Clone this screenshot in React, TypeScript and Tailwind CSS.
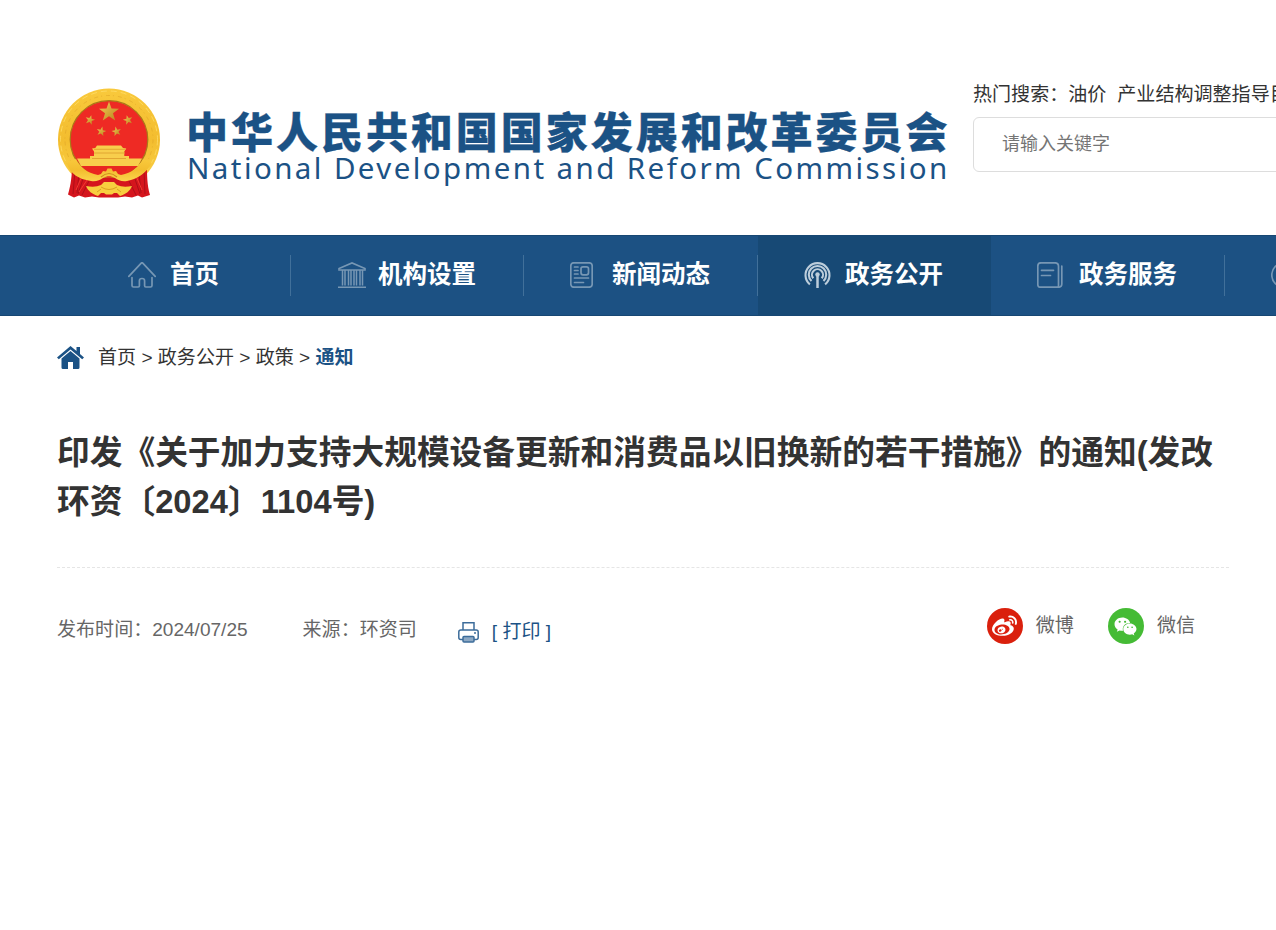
import type { ReactNode } from "react";
import { FaWeibo, FaWeixin } from "react-icons/fa";

interface ItemMenu {
  titulo: string;
  icone: ReactNode;
  ativo?: boolean;
  largura: string;
}

const STAR = "0,-10.500 2.500,-3.400 10,-3.300 4,1.300 6.200,8.500 0,4.200 -6.200,8.500 -4,1.300 -10,-3.300 -2.500,-3.400";

function Emblema() {
  return (
    <svg width="104" height="112" viewBox="0 0 104 112" className="shrink-0">
      <defs>
        <linearGradient id="gold" x1="0" y1="0" x2="0" y2="1">
          <stop offset="0" stopColor="#f9c93c" />
          <stop offset="0.5" stopColor="#f3bd2f" />
          <stop offset="1" stopColor="#fbd54c" />
        </linearGradient>
        <linearGradient id="star" x1="0" y1="0" x2="1" y2="1">
          <stop offset="0" stopColor="#f5cf57" />
          <stop offset="1" stopColor="#b9811c" />
        </linearGradient>
      </defs>
      <circle cx="52" cy="52.500" r="51" fill="url(#gold)" />
      <circle cx="52" cy="52.500" r="44" fill="none" stroke="#dca026" strokeWidth="1" strokeDasharray="4 3 1 4" opacity="0.5" />
      <circle cx="52" cy="52.500" r="48.500" fill="none" stroke="#ffdf6d" strokeWidth="1" strokeDasharray="6 4" opacity="0.7" />
      <circle cx="52" cy="52.500" r="38.800" fill="#ee2a24" stroke="#a97918" strokeWidth="1.200" />
      <g fill="url(#star)">
        <polygon points={STAR} transform="translate(52 25)" />
        <polygon points={STAR} transform="translate(33 33) rotate(15) scale(.48)" />
        <polygon points={STAR} transform="translate(71 33) rotate(-15) scale(.48)" />
        <polygon points={STAR} transform="translate(44.300 44.500) rotate(12) scale(.48)" />
        <polygon points={STAR} transform="translate(59.500 44.500) rotate(-12) scale(.48)" />
      </g>
      <g fill="#f8ce4c">
        <path d="M40 58.500h24l2 2.500 3.300.5-2 3V70.500H37V64.500l-2-3 3.300-.5z" />
        <path d="M33 69h39v2.500h13l-4 7.500H24l-4-7.500h13z" />
      </g>
      <path d="M37 62.300h31M37 66h31M35 71.500h34" stroke="#dfa22f" strokeWidth="0.900" />
      <path d="M24 79h57l-10 8-12 3H45l-12-3z" fill="#e92720" />
      {/* drapery */}
      <path d="M15 80l12 4 12 7h26l12-7 13-5c0 8 0 19 3 29l-8 2.500-4-2-6 2-7-1-7 1H42l-7-1-7 1-6-2-5 2-6-3c3-10 4-20 4-27.500z" fill="#d5151d" />
      <path d="M18 84l-2 23M22 86l-2 20M27 89l-6 18M32 94l-7 14M87 84l1 23M82 86l2 20M77 89l6 18M72 94l7 14" stroke="#a80f17" strokeWidth="0.900" fill="none" />
      <path d="M25 89l-6 14M30 93l-8 12M79 89l6 14" stroke="#f23a30" strokeWidth="1" fill="none" />
      <path d="M9 76L19 72c4 8 11 14 22 16l3-1 2-3 3 .5 1.500-3h4l1.500 3 3-.5 2 3 3 1c11-2 18-8 22-16l9 4c-6 10-14 16-25 18-5 1-9-1-12-3-4-2.500-8-2.500-12 0-3 2-7 4-12 3C21 92 14 87 9 76z" fill="url(#gold)" />
      <path d="M44 90q8-7 16 0" stroke="#cf8e1d" strokeWidth="1.200" fill="none" />
      <path d="M29 99q9 2 15-1l3-3h10l3 3q6 3 15 1c-2 5-6 8-12 10l-3-3h-3l-2 1.500h-6L47 106h-3l-3 3c-6-2-10-5-12-10z" fill="#f8ce3f" />
      <path d="M44 100q8 5 16 0M40 105l4-3M64 105l-4-3" stroke="#d7981f" strokeWidth="0.900" fill="none" />
    </svg>
  );
}

function IconeCasa() {
  return (
    <svg width="28" height="26" viewBox="0 0 28 26" fill="none" stroke="currentColor" strokeWidth="1.700" strokeLinecap="round" strokeLinejoin="round">
      <path d="M.8 14.300L13 1.300q1-1 2 0l12.200 13" />
      <path d="M4 15.500v8q0 1.500 1.500 1.500h4.700q1.200 0 1.200-1.200v-5q0-2.300 2.600-2.300t2.600 2.300v5q0 1.200 1.200 1.200h4.700q1.500 0 1.500-1.500v-8" />
    </svg>
  );
}

function IconePredio() {
  return (
    <svg width="28" height="26" viewBox="0 0 28 26" fill="none" stroke="currentColor" strokeWidth="1.600">
      <path d="M1 8V6.500L14 .9l13 5.600V8z" />
      <path d="M0 25.200h28M4.500 8v15.500M7 8v15.500M10.500 8v15.500M13 8v15.500M16 8v15.500M18.500 8v15.500M22 8v15.500M24.500 8v15.500" strokeWidth="1.500" />
    </svg>
  );
}

function IconeJornal() {
  return (
    <svg width="23" height="26" viewBox="0 0 23 26" fill="none" stroke="currentColor" strokeWidth="1.700" strokeLinecap="round">
      <rect x=".8" y=".8" width="21.400" height="24.400" rx="3" />
      <rect x="11" y="4.800" width="7.500" height="8" rx="2" />
      <path d="M4.500 5H8M4.500 8.500H8M4.500 12H8M4.500 16h14M4.500 20.500h9" />
    </svg>
  );
}

function IconeAntena() {
  return (
    <svg width="27" height="26" viewBox="0 0 27 26" fill="none" stroke="currentColor" strokeWidth="2.100">
      <path d="M5.900 22.400A12 12 0 1 1 21.100 22.400" />
      <path d="M7.500 19A8.700 8.700 0 1 1 19.500 19" />
      <path d="M9.300 16.300A5.500 5.500 0 1 1 17.700 16.300" />
      <path d="M13.500 12v14" strokeWidth="2.500" />
      <circle cx="13.500" cy="12.500" r="2.200" fill="currentColor" stroke="none" />
    </svg>
  );
}

function IconeLivro() {
  return (
    <svg width="26" height="26" viewBox="0 0 26 26" fill="none" stroke="currentColor" strokeWidth="1.700" strokeLinecap="round">
      <path d="M4 .8h14q3.500 0 3.500 3.500v20.900H3.500Q.8 25.200.8 22.500V4Q.8.800 4 .8z" />
      <path d="M24.800 4v18q0 3.200-3.500 3.200M4.500 8.300h12M4.500 13.500h9" />
    </svg>
  );
}

function IconeRelogio() {
  return (
    <svg width="27" height="26" viewBox="0 0 27 26" fill="none" stroke="currentColor" strokeWidth="1.700">
      <circle cx="13" cy="13" r="12.200" />
      <path d="M13 6v8h6" />
    </svg>
  );
}

const menu: ItemMenu[] = [
  { titulo: "首页", icone: <IconeCasa />, largura: "w-[234px] pl-[71px] gap-[14px]" },
  { titulo: "机构设置", icone: <IconePredio />, largura: "w-[233px] pl-[47px] gap-[12px]" },
  { titulo: "新闻动态", icone: <IconeJornal />, largura: "w-[234px] pl-[46px] gap-[19px]" },
  { titulo: "政务公开", icone: <IconeAntena />, ativo: true, largura: "w-[233px] pl-[46px] gap-[14px]" },
  { titulo: "政务服务", icone: <IconeLivro />, largura: "w-[234px] pl-[46px] gap-[16px]" },
  { titulo: "", icone: <IconeRelogio />, largura: "w-[233px] pl-[46px]" },
];

function Navegacao() {
  return (
    <nav className="flex h-[81px] border-y border-[#174773] bg-[#1c5183] pl-[57px]">
      {menu.map((item, i) => (
        <div
          key={i}
          className={`flex shrink-0 items-center ${item.largura} ${item.ativo ? "bg-[#174975]" : ""}`}
        >
          <span className={`shrink-0 pb-px ${item.ativo ? "text-[#bccddb]" : "text-[#7797b4]"}`}>{item.icone}</span>
          <span className="pb-px text-[24.500px] leading-none font-bold whitespace-nowrap text-white">{item.titulo}</span>
          {!item.ativo && menu[i + 1] && <span className="ml-auto h-[41px] w-px bg-[#41709a]" />}
        </div>
      ))}
    </nav>
  );
}

function App() {
  return (
    <div className="h-[930px] w-full overflow-hidden bg-white font-['Liberation_Sans','Noto_Sans_CJK_SC',sans-serif] text-[19.060px] text-[#333]">
      <header className="flex h-[235px]">
        <div className="flex shrink-0 pt-[87px] pl-[57px]">
          <Emblema />
          <div className="ml-[25px] w-[787px] text-[#1b5285]">
            <div className="mt-[21px] h-[44px] font-['Noto_Sans_CJK_SC',sans-serif] text-[42px] leading-[44px] font-black tracking-[2.970px] whitespace-nowrap [-webkit-text-stroke:0.3px_#1b5285]">
              中华人民共和国国家发展和改革委员会
            </div>
            <div className="mt-[2px] ml-px font-['Noto_Sans','Open_Sans',sans-serif] text-[29.500px] leading-[28px] tracking-[2.420px] whitespace-nowrap">
              National Development and Reform Commission
            </div>
          </div>
        </div>
        <div className="w-[400px] shrink-0 pt-[81px]">
          <div className="flex h-[36px] leading-[28px] whitespace-nowrap">
            <span>热门搜索：</span>
            <span>油价</span>
            <span className="ml-[11px]">产业结构调整指导目录</span>
          </div>
          <input
            type="text"
            placeholder="请输入关键字"
            className="h-[55px] w-full rounded-md border border-[#ddd] pl-[28px] text-[18px] placeholder:text-[#757575]"
          />
        </div>
      </header>

      <Navegacao />

      <main className="pl-[57px]">
        <div className="flex h-[82px] items-center whitespace-nowrap">
          <svg width="27" height="23" viewBox="0 0 27 23" className="mr-[14px] text-[#1b5285]" fill="currentColor">
            <path d="M13.500 0L0 11.500l1.800 1.800L13.500 3.500l11.700 9.800 1.800-1.800-4-3.500V1h-3.500v4z" />
            <path d="M13.500 5L4.500 12.500v9q0 1.500 1.500 1.500h5v-7h5v7h5q1.500 0 1.500-1.500v-9z" />
          </svg>
          <span className="pt-[2px]">首页 &gt; 政务公开 &gt; 政策 &gt; <b className="text-[#1b5285]">通知</b></span>
        </div>

        <h1 className="mt-[30px] w-[1172px] text-[32.720px] leading-[49px] font-bold">
          印发《关于加力支持大规模设备更新和消费品以旧换新的若干措施》的通知(发改环资〔2024〕1104号)
        </h1>

        <div className="mt-[41px] w-[1172px] border-t border-dashed border-[#e5e5e5]" />

        <div className="flex w-[1172px] pt-[39px] whitespace-nowrap text-[#666]">
          <span className="mt-[8px] leading-[30px]">发布时间：2024/07/25</span>
          <span className="mt-[8px] ml-[55px] leading-[30px]">来源：环资司</span>
          <svg width="21" height="21" viewBox="0 0 21 21" className="mt-[15px] ml-[41px]" fill="none" stroke="#3c6c9a" strokeWidth="1.500">
            <path d="M5 8V.8h11V8" />
            <rect x=".8" y="8" width="19.400" height="9.500" rx="2" />
            <rect x="5" y="14.500" width="11" height="5.500" rx="1" fill="#8da8c3" />
            <path d="M16 11h2" />
          </svg>
          <span className="mt-[10px] ml-[13px] leading-[30px] text-[#1b5285]">[ 打印 ]</span>
          <div className="mt-px ml-auto flex h-9 items-center pr-[34px]">
            <span className="flex size-9 items-center justify-center rounded-full bg-[#da200d] text-white">
              <FaWeibo size={25} />
            </span>
            <span className="ml-[13px]">微博</span>
            <span className="ml-[34px] flex size-9 items-center justify-center rounded-full bg-[#45bb35] text-white">
              <FaWeixin size={23} />
            </span>
            <span className="ml-[13px]">微信</span>
          </div>
        </div>
      </main>
    </div>
  );
}

export default App;
